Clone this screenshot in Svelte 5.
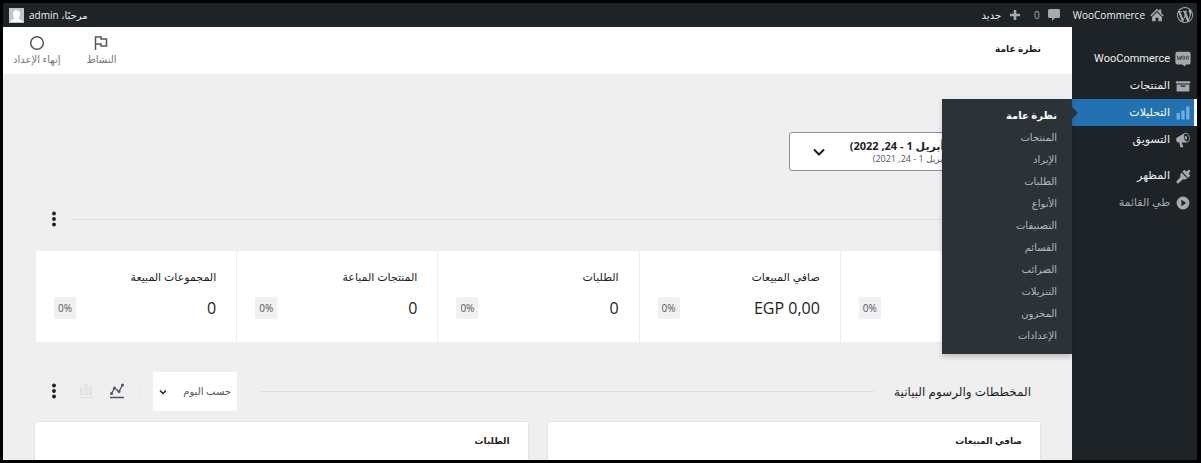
<script lang="ts">
  type MenuItem = { label: string; icon: string; active?: boolean; gap?: boolean };

  const menu: MenuItem[] = [
    { label: 'WooCommerce', icon: 'woo' },
    { label: 'المنتجات', icon: 'archive' },
    { label: 'التحليلات', icon: 'chart', active: true },
    { label: 'التسويق', icon: 'megaphone' },
    { label: 'المظهر', icon: 'brush', gap: true },
  ];

  const submenu = [
    'نظرة عامة',
    'المنتجات',
    'الإيراد',
    'الطلبات',
    'الأنواع',
    'التصنيفات',
    'القسائم',
    'الضرائب',
    'التنزيلات',
    'المخزون',
    'الإعدادات',
  ];

  const stats = [
    { label: 'إجمالي المبيعات', value: 'EGP 0,00', delta: '0%' },
    { label: 'صافي المبيعات', value: 'EGP 0,00', delta: '0%' },
    { label: 'الطلبات', value: '0', delta: '0%' },
    { label: 'المنتجات المباعة', value: '0', delta: '0%' },
    { label: 'المجموعات المبيعة', value: '0', delta: '0%' },
  ];

  const charts = ['صافي المبيعات', 'الطلبات'];

  let interval = $state('day');
  let chartType = $state('line');
</script>

{#snippet dots()}
  <button class="dots" aria-label="⋮">
    <svg width="6" height="16" viewBox="0 0 6 16" fill="currentColor">
      <circle cx="3" cy="2.5" r="1.9" />
      <circle cx="3" cy="8" r="1.9" />
      <circle cx="3" cy="13.5" r="1.9" />
    </svg>
  </button>
{/snippet}

{#snippet menuIcon(name: string)}
  <svg class="menu-icon" width="16" height="16" viewBox="0 0 20 20" fill="currentColor">
    {#if name === 'woo'}
      <path d="M3 1h14a2.500 2.500 0 0 1 2.500 2.500v11A2.500 2.500 0 0 1 17 17h-3.500l-1 2.500-3.500-2.500H3a2.500 2.500 0 0 1-2.500-2.500v-11A2.500 2.500 0 0 1 3 1z" />
      <path d="M3 6l1 5 2-4 1 4 1.500-5" fill="none" stroke="#2c3338" stroke-width="1.100" />
      <ellipse cx="11" cy="8.500" rx="1.400" ry="2.200" fill="none" stroke="#2c3338" stroke-width="1" />
      <ellipse cx="15.500" cy="8.500" rx="1.400" ry="2.200" fill="none" stroke="#2c3338" stroke-width="1" />
    {:else if name === 'archive'}
      <path d="M1 4h18v3H1zM2 8h16v9H2zM7 9.500v1.500h6V9.500z" fill-rule="evenodd" />
    {:else if name === 'chart'}
      <path d="M14 2h4v16h-4zM8 7h4v11H8zM2 10h4v8H2z" />
    {:else if name === 'megaphone'}
      <path d="M18.15 5.940c.46 1.620.38 3.220-.02 4.480-.42 1.280-1.260 2.180-2.300 2.480-.16.060-.26.060-.4.060-.06.020-.12.020-.18.020-.06.020-.14.020-.22.020h-6.800l2.220 5.500c.02.140-.06.260-.14.340-.08.100-.24.160-.34.160H6.950c-.1 0-.26-.06-.34-.16-.08-.08-.16-.2-.14-.34l-1-5.500H4.250l-.02-.02c-.5.060-1.080-.18-1.540-.62s-.88-1.080-1.060-1.880c-.24-.8-.2-1.560-.02-2.200.18-.62.58-1.080 1.060-1.300l.02-.02 9-5.400c.1-.06.180-.1.240-.16.060-.04.140-.08.240-.12.160-.08.280-.12.500-.18 1.040-.3 2.240.1 3.220.98s1.840 2.240 2.260 3.860zm-2.580 5.980h-.02c.4-.1.740-.34 1.040-.7.580-.7.860-1.760.86-3.040 0-.64-.1-1.300-.28-1.980-.34-1.360-1.020-2.500-1.780-3.240s-1.680-1.100-2.460-.88c-.82.220-1.400.96-1.700 2-.32 1.040-.28 2.360.060 3.720.38 1.360 1 2.500 1.800 3.240.78.740 1.620 1.100 2.480.88zm-2.540-7.080c.22-.04.420-.02.620.040.380.160.760.480 1.020 1s.420 1.200.420 1.780c0 .3-.04.560-.12.800-.18.480-.44.840-.86.940-.34.100-.8-.06-1.140-.4s-.64-.86-.78-1.500c-.18-.62-.12-1.240.02-1.720s.480-.84.820-.94z" />
    {:else if name === 'brush'}
      <path d="M9 4.500l3-2 2.500 2 3-2.500 2 2-2.500 3 2 2.500-2.500 3zM8 5.500l7.500 7.500-3 1.500-2.500-.5-5.500 5c-1.500 1-3.500-1-2.500-2.500l5-5.500-.5-2.500z" />
    {:else if name === 'collapse'}
      <path d="M10 2a8 8 0 1 0 0 16 8 8 0 0 0 0-16zM8 6l6 4-6 4z" fill-rule="evenodd" />
    {/if}
  </svg>
{/snippet}

<div class="frame" dir="rtl">
  <header class="adminbar">
    <a href="#wp" class="bar-link" aria-label="WordPress">
      <svg width="16" height="16" viewBox="0 0 20 20" fill="currentColor">
        <path d="M20 10c0-5.510-4.490-10-10-10C4.480 0 0 4.490 0 10c0 5.520 4.480 10 10 10 5.510 0 10-4.480 10-10zM7.780 15.370L4.370 6.220c.55-.02 1.170-.08 1.170-.08.5-.06.44-1.130-.06-1.110 0 0-1.450.11-2.370.11-.18 0-.37 0-.58-.01C4.120 2.690 6.870 1.110 10 1.110c2.330 0 4.450.87 6.050 2.340-.68-.11-1.650.39-1.650 1.580 0 .74.45 1.360.9 2.100.35.610.55 1.360.55 2.460 0 1.490-1.400 5-1.400 5l-3.030-8.370c.54-.02.82-.17.82-.17.5-.05.44-1.250-.06-1.220 0 0-1.440.12-2.380.12-.87 0-2.330-.12-2.330-.12-.5-.03-.56 1.200-.06 1.220l.92.080 1.260 3.410zM17.410 10c.24-.64.74-1.870.43-4.250.7 1.290 1.050 2.710 1.050 4.250 0 3.290-1.730 6.240-4.400 7.780.97-2.590 1.940-5.200 2.920-7.780zM6.100 18.090C3.120 16.650 1.110 13.530 1.110 10c0-1.300.23-2.480.72-3.590C3.250 10.300 4.670 14.200 6.100 18.090zm4.030-6.630l2.580 6.980c-.86.290-1.760.45-2.710.45-.79 0-1.570-.11-2.290-.33.810-2.380 1.620-4.740 2.420-7.100z" />
      </svg>
    </a>
    <a href="#home" class="bar-link">
      <svg width="14" height="14" viewBox="0 0 20 20" fill="currentColor">
        <path d="M10 1l3 3V2h3v5l3.500 3.500L18 12l-8-8-8 8-1.500-1.500zM10 6l7 7v6h-5v-5H8v5H3v-6z" />
      </svg>
      <span>WooCommerce</span>
    </a>
    <a href="#comments" class="bar-link muted">
      <svg width="12" height="12" viewBox="0 0 12 12" fill="currentColor">
        <path d="M1.500 0h9A1.500 1.500 0 0 1 12 1.500v6A1.500 1.500 0 0 1 10.500 9H7l-3 3V9H1.500A1.500 1.500 0 0 1 0 7.500v-6A1.500 1.500 0 0 1 1.500 0z" />
      </svg>
      <span>0</span>
    </a>
    <a href="#new" class="bar-link new">
      <svg width="12" height="12" viewBox="0 0 12 12" fill="currentColor">
        <path d="M4.700 1h2.600v3.700H11v2.600H7.300V11H4.700V7.300H1V4.700h3.700z" />
      </svg>
      <span>جديد</span>
    </a>
    <a href="#profile" class="bar-link profile">
      <span>مرحبًا، admin</span>
      <svg width="15" height="15" viewBox="0 0 15 15">
        <rect width="15" height="15" fill="#c3c4c7" />
        <path d="M1 14c1-2 3-2.500 4.500-3.500C4 8.500 3.500 6 4.300 4c.8-2.300 5.600-2.300 6.400 0 .8 2 .3 4.500-1.200 6.500C11 11.500 13 12 14 14z" fill="#fff" />
      </svg>
    </a>
  </header>

  <div class="body">
    <nav class="sidebar">
      {#each menu as item}
        <div class="menu-item" class:active={item.active} class:gap={item.gap}>
          <a href="#{item.icon}">
            {@render menuIcon(item.icon)}
            <span>{item.label}</span>
          </a>
          {#if item.active}
            <ul class="submenu">
              {#each submenu as label, i}
                <li><a href="#sub-{i}" class:current={i === 0}>{label}</a></li>
              {/each}
            </ul>
          {/if}
        </div>
      {/each}
      <button class="collapse">
        {@render menuIcon('collapse')}
        <span>طي القائمة</span>
      </button>
    </nav>

    <div class="content">
      <div class="topbar">
        <h1>نظرة عامة</h1>
        <div class="tabs">
          <button>
            <svg width="16" height="16" viewBox="0 0 16 16" fill="none" stroke="currentColor" stroke-width="1.500">
              <path d="M2.500 15V2h5.500v2h5.500v7H8V9H2.500" />
            </svg>
            <span>النشاط</span>
          </button>
          <button>
            <svg width="16" height="16" viewBox="0 0 16 16" fill="none" stroke="currentColor" stroke-width="1.500">
              <circle cx="8" cy="8" r="6.300" />
            </svg>
            <span>إنهاء الإعداد</span>
          </button>
        </div>
      </div>

      <main>
        <button class="date-picker">
          <span class="dates">
            <strong>(أبريل 1 - 24, 2022)</strong>
            <span>(أبريل 1 - 24, 2021)</span>
          </span>
          <svg width="14" height="14" viewBox="0 0 14 14" fill="none" stroke="currentColor" stroke-width="2">
            <path d="M2 4.500l5 5 5-5" />
          </svg>
        </button>

        <div class="section-head performance">
          <hr />
          {@render dots()}
        </div>

        <ul class="stats">
          {#each stats as stat}
            <li>
              <span class="stat-label">{stat.label}</span>
              <div class="stat-data">
                <span class="value" dir="ltr">{stat.value}</span>
                <span class="delta" dir="ltr">{stat.delta}</span>
              </div>
            </li>
          {/each}
        </ul>

        <div class="section-head charts-head">
          <h2>المخططات والرسوم البيانية</h2>
          <hr />
          <div class="interval">
            <select bind:value={interval} aria-label="حسب اليوم">
              <option value="day">حسب اليوم</option>
            </select>
            <svg width="8" height="8" viewBox="0 0 8 8" fill="none" stroke="currentColor" stroke-width="1.400">
              <path d="M1 2.500l3 3 3-3" />
            </svg>
          </div>
          <div class="chart-types">
            <button class:selected={chartType === 'line'} onclick={() => (chartType = 'line')} aria-label="line">
              <svg width="16" height="16" viewBox="0 0 16 16" fill="none" stroke="currentColor" stroke-width="1.300">
                <path d="M2.500 10.500l3-5.500 4.500 3.500 3.500-6.500M1 14.500h14" />
                <g fill="currentColor" stroke="none">
                  <circle cx="2.500" cy="10.500" r="1.500" />
                  <circle cx="5.500" cy="5" r="1.500" />
                  <circle cx="10" cy="8.500" r="1.500" />
                  <circle cx="13.500" cy="2" r="1.500" />
                </g>
              </svg>
            </button>
            <button class:selected={chartType === 'bar'} onclick={() => (chartType = 'bar')} aria-label="bar">
              <svg width="16" height="16" viewBox="0 0 16 16" fill="none" stroke="currentColor">
                <path d="M2.500 12V5.500h2V12zM7 12V1.500h2V12zM11.500 12V3.500h2V12zM1 14.500h14" />
              </svg>
            </button>
          </div>
          {@render dots()}
        </div>

        <div class="charts">
          {#each charts as title}
            <section class="card">
              <h3>{title}</h3>
            </section>
          {/each}
        </div>
      </main>
    </div>
  </div>
</div>

<style>
  :global(body) {
    background: #000;
  }

  .frame {
    box-sizing: border-box;
    display: flex;
    flex-direction: column;
    height: 100vh;
    padding: 3px 4px 3px 3px;
    overflow: hidden;
    font-family: 'Open Sans', 'DejaVu Sans', sans-serif;
    font-size: 11px;
    color: #1e1e1e;
  }

  .frame :global(*) {
    box-sizing: border-box;
  }

  button {
    padding: 0;
    border: none;
    background: none;
    font: inherit;
    color: inherit;
    cursor: pointer;
  }

  a {
    color: inherit;
    text-decoration: none;
  }

  ul {
    margin: 0;
    padding: 0;
    list-style: none;
  }

  svg {
    display: block;
    flex: none;
  }

  .adminbar {
    display: flex;
    flex: none;
    align-items: center;
    gap: 13px;
    height: 24px;
    padding: 0 4px 0 6px;
    background: #1d2327;
    color: #f0f0f1;
    font-size: 10px;
  }

  .bar-link {
    display: flex;
    align-items: center;
    gap: 5px;
  }

  .bar-link svg {
    color: #a7aaad;
  }

  .bar-link.muted {
    gap: 8px;
    color: #a7aaad;
  }

  .bar-link.new {
    gap: 8px;
  }

  .profile {
    margin-right: auto;
  }

  .body {
    display: flex;
    flex: 1;
    min-height: 0;
    overflow: hidden;
  }

  .sidebar {
    position: relative;
    z-index: 1;
    flex: none;
    width: 125px;
    padding-top: 18px;
    background: #1d2327;
    color: #f0f0f1;
    font-family: Roboto, 'Open Sans', 'DejaVu Sans', sans-serif;
  }

  .menu-item {
    position: relative;
  }

  .menu-item.gap {
    margin-top: 9px;
  }

  .menu-item > a,
  .collapse {
    display: flex;
    align-items: center;
    gap: 5px;
    width: 100%;
    height: 27px;
    padding-right: 6px;
  }

  .menu-icon {
    color: #a7aaad;
  }

  .collapse {
    color: #a7aaad;
  }

  .menu-item.active > a {
    padding-right: 3px;
    border-right: 3px solid #fff;
    background: #2271b1;
    color: #fff;
  }

  .active .menu-icon {
    color: #72aee6;
  }

  .menu-item.active::after {
    content: '';
    position: absolute;
    top: 8px;
    left: 0;
    border: 6px solid transparent;
    border-right: none;
    border-left-color: #2c3338;
  }

  .submenu {
    position: absolute;
    top: 0;
    right: 100%;
    width: 130px;
    padding: 6px 15px 7px;
    background: #2c3338;
    box-shadow: 0 3px 5px rgba(0, 0, 0, 0.2);
  }

  .submenu a {
    display: block;
    color: #b4b9be;
    font-size: 10px;
    line-height: 22px;
  }

  .submenu .current {
    color: #fff;
    font-weight: 700;
  }

  .content {
    display: flex;
    flex: 1;
    flex-direction: column;
    min-width: 0;
    background: #efefef;
  }

  .topbar {
    display: flex;
    flex: none;
    align-items: center;
    justify-content: space-between;
    height: 47px;
    padding: 0 31px 0 10px;
    background: #fff;
  }

  h1,
  h3 {
    margin: 0;
    font-size: 9px;
    font-weight: 700;
  }

  h1 {
    padding-bottom: 4px;
  }

  .tabs {
    display: flex;
    gap: 26px;
    color: #757575;
    font-size: 10px;
  }

  .tabs button {
    display: flex;
    flex-direction: column;
    align-items: center;
    line-height: 16px;
  }

  .tabs svg {
    color: #50575e;
  }

  main {
    padding: 58px 31px 0;
  }

  .date-picker {
    display: flex;
    align-items: center;
    justify-content: space-between;
    width: 252px;
    height: 39px;
    padding: 0 92px 0 22px;
    border: 1px solid #8c8f94;
    border-radius: 3px;
    background: #fff;
  }

  .dates {
    display: flex;
    flex-direction: column;
    color: #50575e;
    font-size: 9px;
    line-height: 13px;
    text-align: right;
    white-space: nowrap;
  }

  .dates strong {
    color: #1e1e1e;
    font-size: 11px;
  }

  .section-head {
    display: flex;
    align-items: center;
    height: 40px;
    padding: 0 10px 0 17px;
  }

  .performance {
    margin-top: 28px;
  }

  hr {
    flex: 1;
    margin: 0 20px 0 15px;
    border: none;
    border-top: 1px solid #dcdcde;
  }

  .dots {
    display: flex;
    justify-content: center;
    width: 6px;
  }

  .stats {
    display: grid;
    grid-template-columns: repeat(5, 1fr);
    margin: 12px 0 0 1px;
    background: #fff;
  }

  .stats li {
    height: 91px;
    padding: 17px 20px 0 18px;
    border-left: 1px solid #ededed;
  }

  .stat-label {
    display: block;
    line-height: 18px;
  }

  .stat-data {
    display: flex;
    align-items: center;
    justify-content: space-between;
    margin-top: 11px;
    line-height: 22px;
  }

  .value {
    font-size: 16px;
  }

  .delta {
    padding: 0 4px;
    border-radius: 2px;
    background: #f0f0f0;
    font-size: 10px;
    color: #50575e;
  }

  .charts-head {
    margin-top: 29px;
  }

  .charts-head hr {
    margin-left: 23px;
  }

  h2 {
    margin: 0;
    font-size: 12px;
    font-weight: 500;
  }

  .interval {
    position: relative;
  }

  .interval select {
    width: 84px;
    height: 39px;
    padding: 0 6px 0 20px;
    border: none;
    border-radius: 2px;
    background: #fff;
    color: #50575e;
    font: inherit;
    font-size: 10px;
    appearance: none;
  }

  .interval svg {
    position: absolute;
    top: 16px;
    left: 6px;
    pointer-events: none;
  }

  .chart-types {
    display: flex;
    gap: 15px;
    margin: 0 12px 0 21px;
    padding-right: 15px;
    border-right: 1px solid #e6e6e6;
  }

  .chart-types button {
    color: #dcdcde;
  }

  .chart-types .selected {
    color: #50575e;
  }

  .charts {
    display: grid;
    grid-template-columns: 1fr 1fr;
    gap: 18px;
    margin-top: 10px;
  }

  .card {
    height: 200px;
    padding: 10px 18px;
    border: 1px solid #e2e4e7;
    border-radius: 2px;
    background: #fff;
  }

  h3 {
    line-height: 18px;
  }
</style>
